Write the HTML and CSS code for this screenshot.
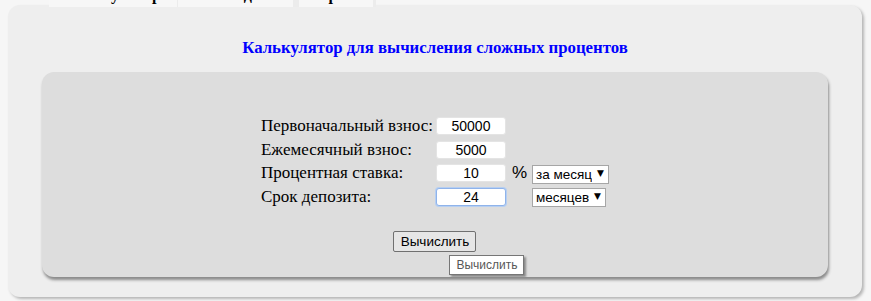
FILE: index.html
```html
<!DOCTYPE html>
<html lang="ru">
<head>
<meta charset="utf-8">
<title>Калькулятор сложных процентов</title>
<link rel="stylesheet" href="styles.css">
</head>
<body>
<div class="tabs">
  <div class="tab tab-1"><span>Калькулятор</span></div>
  <div class="tab tab-2"><span>Вклады</span></div>
  <div class="tab tab-3"><span>Сервис</span></div>
</div>
<div class="panel">
  <h1 class="title">Калькулятор для вычисления сложных процентов</h1>
  <div class="inner">
    <table class="form">
      <tr>
        <td class="label">Первоначальный взнос:</td>
        <td class="field"><input class="num" type="text" value="50000"></td>
        <td class="unit"></td>
        <td class="opt"></td>
      </tr>
      <tr>
        <td class="label">Ежемесячный взнос:</td>
        <td class="field"><input class="num" type="text" value="5000"></td>
        <td class="unit"></td>
        <td class="opt"></td>
      </tr>
      <tr>
        <td class="label">Процентная ставка:</td>
        <td class="field"><input class="num" type="text" value="10"></td>
        <td class="unit">%</td>
        <td class="opt"><span class="sel sel-month"><select><option>за месяц</option></select></span></td>
      </tr>
      <tr>
        <td class="label">Срок депозита:</td>
        <td class="field"><input class="num focused" type="text" value="24"></td>
        <td class="unit"></td>
        <td class="opt"><span class="sel sel-months"><select><option>месяцев</option></select></span></td>
      </tr>
    </table>
    <div class="actions">
      <span class="btn-wrap">
        <button class="btn" type="button">Вычислить</button>
        <span class="tooltip">Вычислить</span>
      </span>
    </div>
  </div>
</div>
</body>
</html>
```
FILE: styles.css
```css
html, body {
  margin: 0;
  padding: 0;
}
body {
  background: #f6f6f6;
  font-family: "Liberation Serif", "Times New Roman", serif;
  width: 871px;
  height: 301px;
  overflow: hidden;
}
.tabs {
  display: flex;
  margin-left: 49px;
  width: 327px;
  height: 7px;
  background: #ececec;
  position: relative;
  z-index: 2;
}
.tab {
  height: 7px;
  overflow: hidden;
  background: #f7f7f7;
  font-weight: bold;
  font-size: 16px;
  color: #000;
  text-align: center;
}
.tab span {
  display: block;
  line-height: 16px;
  margin-top: -13px;
}
.tab-1 { width: 128px; }
.tab-2 { width: 115px; margin-left: 1px; }
.tab-3 { width: 74px; margin-left: 6px; }

.panel {
  margin: -2px 0 0 8px;
  width: 854px;
  height: 292px;
  box-sizing: border-box;
  background: #eeeeee;
  border-radius: 12px;
  box-shadow: 2px 2px 3px #b5b5b5;
  padding-top: 33px;
  position: relative;
  z-index: 1;
}
.title {
  margin: 0;
  font-size: 16.8px;
  line-height: 20px;
  font-weight: bold;
  color: #0000ff;
  text-align: center;
}
.inner {
  margin: 14px auto 0;
  width: 92%;
  height: 205px;
  box-sizing: border-box;
  background: #dddddd;
  border-radius: 12px;
  box-shadow: 1px 3px 3px #8a8a8a;
  padding-top: 42px;
}
.form {
  margin: 0 auto;
  border-collapse: collapse;
  font-size: 17px;
}
.form td {
  padding: 0;
  height: 23.7px;
  vertical-align: middle;
}
.label { width: 175px; }
.field { width: 76px; }
.unit { width: 20px; font-family: "Liberation Sans", Arial, sans-serif; font-size: 17px; }
.opt { width: 77px; }

.num {
  display: block;
  margin-left: 0;
  width: 70px;
  height: 18px;
  box-sizing: border-box;
  border: 1px solid #e4e4e4;
  border-radius: 3px;
  background: #fff;
  padding: 0;
  text-align: center;
  font-family: "Liberation Sans", Arial, sans-serif;
  font-size: 14px;
  color: #000;
}
.num.focused {
  border: 1px solid #8fb3ea;
  box-shadow: 0 0 0 1px #b6cff2;
}
.sel {
  position: relative;
  display: inline-block;
  vertical-align: middle;
}
.sel select {
  -webkit-appearance: none;
  appearance: none;
  height: 19px;
  box-sizing: border-box;
  border: 1px solid #a6a6a6;
  border-radius: 0;
  background: #fff;
  font-family: "Liberation Sans", Arial, sans-serif;
  font-size: 13.5px;
  color: #000;
  padding: 0 16px 0 3px;
  margin: 0;
}
.sel-month select { width: 77px; }
.sel-months select { width: 74px; }
.sel::after {
  content: "\25BC";
  position: absolute;
  right: 5px;
  top: 4px;
  font-family: "DejaVu Sans", sans-serif;
  font-size: 9px;
  line-height: 10px;
  color: #000;
  pointer-events: none;
}
.actions {
  text-align: center;
  margin-top: 22px;
}
.btn-wrap {
  position: relative;
  display: inline-block;
}
.btn {
  width: 83px;
  height: 21px;
  box-sizing: border-box;
  border: 1px solid #707070;
  border-radius: 2px;
  background: #e6e6e6;
  font-family: "Liberation Sans", Arial, sans-serif;
  font-size: 13.5px;
  color: #000;
  padding: 0;
  margin: 0;
}
.tooltip {
  position: absolute;
  left: 56px;
  top: 24px;
  width: 75px;
  height: 20px;
  box-sizing: border-box;
  background: #fff;
  border: 1px solid #767676;
  box-shadow: 2px 2px 2px #8a8a8a;
  font-family: "Liberation Sans", Arial, sans-serif;
  font-size: 12px;
  line-height: 18px;
  color: #575757;
  text-align: center;
  white-space: nowrap;
}
```
